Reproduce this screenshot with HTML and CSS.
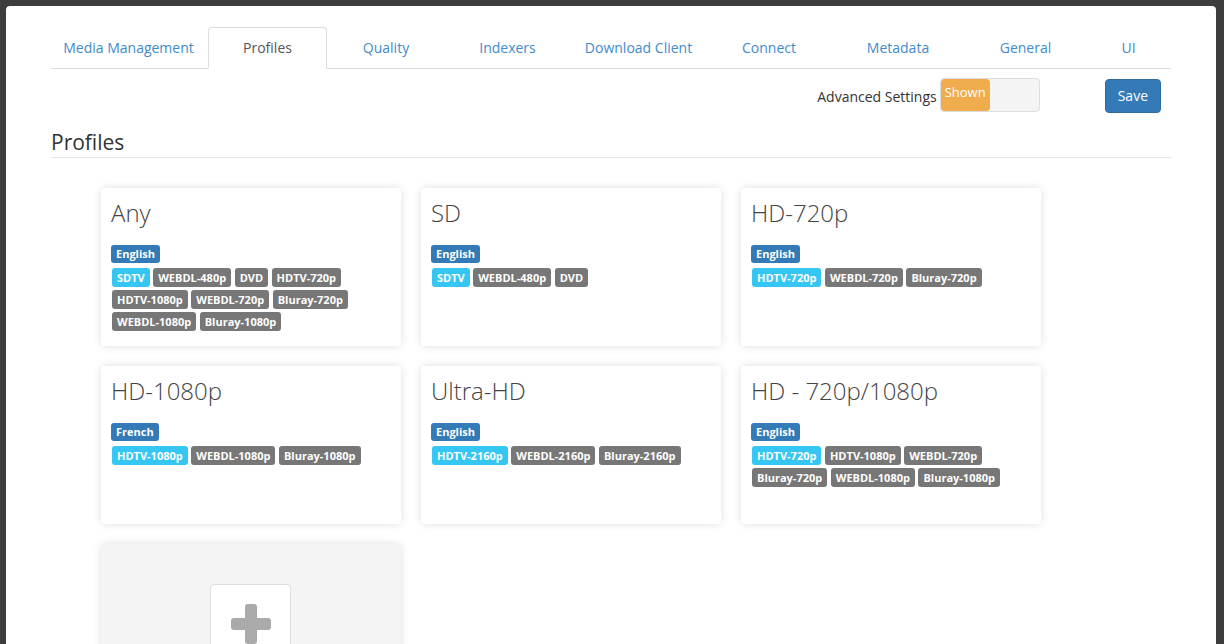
FILE: index.html
```html
<!DOCTYPE html>
<html lang="en">
<head>
  <meta charset="UTF-8" />
  <title>Settings - Profiles</title>
  <link rel="stylesheet" href="styles.css">
</head>
<body>

  <div class="modal">
    <ul class="tabs">
      <li><a href="#">Media Management</a></li>
      <li class="active"><a href="#">Profiles</a></li>
      <li><a href="#">Quality</a></li>
      <li><a href="#">Indexers</a></li>
      <li><a href="#">Download Client</a></li>
      <li><a href="#">Connect</a></li>
      <li><a href="#">Metadata</a></li>
      <li><a href="#">General</a></li>
      <li><a href="#">UI</a></li>
    </ul>

    <div class="toolbar">
      <span class="adv-label">Advanced Settings</span>
      <div class="toggle">
        <span class="toggle-on">Shown</span>
      </div>
      <button class="btn-save">Save</button>
    </div>

    <h2 class="legend">Profiles</h2>

    <div class="profiles">
      <div class="card">
        <h3 class="card-title">Any</h3>
        <div class="lang"><span class="label label-lang">English</span></div>
        <div class="qualities">
          <span class="label label-cutoff">SDTV</span>
          <span class="label">WEBDL-480p</span>
          <span class="label">DVD</span>
          <span class="label">HDTV-720p</span>
          <span class="label">HDTV-1080p</span>
          <span class="label">WEBDL-720p</span>
          <span class="label">Bluray-720p</span>
          <span class="label">WEBDL-1080p</span>
          <span class="label">Bluray-1080p</span>
        </div>
      </div>

      <div class="card">
        <h3 class="card-title">SD</h3>
        <div class="lang"><span class="label label-lang">English</span></div>
        <div class="qualities">
          <span class="label label-cutoff">SDTV</span>
          <span class="label">WEBDL-480p</span>
          <span class="label">DVD</span>
        </div>
      </div>

      <div class="card">
        <h3 class="card-title">HD-720p</h3>
        <div class="lang"><span class="label label-lang">English</span></div>
        <div class="qualities">
          <span class="label label-cutoff">HDTV-720p</span>
          <span class="label">WEBDL-720p</span>
          <span class="label">Bluray-720p</span>
        </div>
      </div>

      <div class="card">
        <h3 class="card-title">HD-1080p</h3>
        <div class="lang"><span class="label label-lang">French</span></div>
        <div class="qualities">
          <span class="label label-cutoff">HDTV-1080p</span>
          <span class="label">WEBDL-1080p</span>
          <span class="label">Bluray-1080p</span>
        </div>
      </div>

      <div class="card">
        <h3 class="card-title">Ultra-HD</h3>
        <div class="lang"><span class="label label-lang">English</span></div>
        <div class="qualities">
          <span class="label label-cutoff">HDTV-2160p</span>
          <span class="label">WEBDL-2160p</span>
          <span class="label">Bluray-2160p</span>
        </div>
      </div>

      <div class="card">
        <h3 class="card-title">HD - 720p/1080p</h3>
        <div class="lang"><span class="label label-lang">English</span></div>
        <div class="qualities">
          <span class="label label-cutoff">HDTV-720p</span>
          <span class="label">HDTV-1080p</span>
          <span class="label">WEBDL-720p</span>
          <span class="label">Bluray-720p</span>
          <span class="label">WEBDL-1080p</span>
          <span class="label">Bluray-1080p</span>
        </div>
      </div>

      <!-- add new profile -->
      <div class="card card-add">
        <div class="add-box">
          <svg width="40" height="40" viewBox="0 0 40 40">
            <rect x="14" y="0" width="12" height="40" rx="3" fill="#aaa" />
            <rect x="0" y="14" width="40" height="12" rx="3" fill="#aaa" />
          </svg>
        </div>
      </div>
    </div>
  </div>

</body>
</html>
```

FILE: styles.css
```css
* { box-sizing: border-box; }
body {
  margin: 0;
  height: 644px;
  overflow: hidden;
  background-color: #3d3d3d;
  font-family: 'Open Sans', 'Liberation Sans', sans-serif;
  font-size: 14px;
  color: #333;
}
.modal {
  margin: 6px 9px 0 6px;
  width: 1210px;
  height: 700px;
  background: #fff;
  border-radius: 4px 4px 0 0;
  padding: 21px 45px 0 45px;
}

/* tabs */
.tabs {
  list-style: none;
  margin: 0;
  padding: 0;
  display: grid;
  grid-template-columns: 157px 119px 118px 125px 137px 124px 134px 121px 85px;
  border-bottom: 1px solid #ddd;
}
.tabs li { margin-bottom: -1px; }
.tabs a {
  display: block;
  padding: 10px 5px;
  line-height: 20px;
  text-align: center;
  color: #428bca;
  text-decoration: none;
  border: 1px solid transparent;
  border-radius: 4px 4px 0 0;
}
.tabs li:first-child a { padding-right: 7px; }
.tabs li.active a {
  color: #555;
  background: #fff;
  border-color: #ddd #ddd transparent;
}

/* toolbar */
.toolbar {
  display: flex;
  justify-content: flex-end;
  align-items: center;
  margin-top: 9px;
  height: 35px;
}
.adv-label { margin-right: 3px; margin-top: 2px; color: #333; }
.toggle {
  width: 100px;
  height: 34px;
  margin-top: -1px;
  border: 1px solid #ddd;
  border-radius: 4px;
  background: #f4f4f4;
  display: flex;
}
.toggle-on {
  width: 49px;
  background: #f0ad4e;
  color: #fff;
  border-radius: 4px;
  font-size: 13px;
  line-height: 27px;
  text-align: center;
}
.btn-save {
  margin-left: 65px;
  margin-right: 10px;
  padding: 6px 12px;
  font-family: inherit;
  font-size: 14px;
  line-height: 20px;
  color: #fff;
  background: #337ab7;
  border: 1px solid #2e6da4;
  border-radius: 4px;
}

.legend {
  margin: 14px 0 30px;
  font-size: 21px;
  font-weight: 400;
  line-height: 30px;
  color: #333;
  border-bottom: 1px solid #e5e5e5;
}

/* profile cards */
.profiles {
  display: flex;
  flex-wrap: wrap;
  gap: 20px;
  width: 990px;
  padding-left: 50px;
}
.card {
  width: 300px;
  height: 158px;
  padding: 10px;
  background: #fff;
  border-radius: 4px;
  box-shadow: 0 0 9px rgba(0, 0, 0, 0.13);
}
.card-title {
  margin: 0 0 17px;
  font-size: 24px;
  font-weight: 300;
  line-height: 30px;
  color: #444;
}
.lang { margin-bottom: 5px; display: flex; }
.qualities { display: flex; flex-wrap: wrap; gap: 3px 3.5px; padding-left: 1px; }
.label {
  display: inline-block;
  padding: 0 5px;
  font-size: 11px;
  font-weight: 700;
  line-height: 19px;
  color: #fff;
  background: #777;
  border-radius: 3px;
}
.label-lang { background: #337ab7; line-height: 18px; }
.label-cutoff { background: #36c6f4; }

.card-add {
  background: #f4f4f4;
  padding-top: 40px;
}
.add-box {
  width: 81px;
  margin-left: 99px;
  padding: 19px 20px;
  background: #fff;
  border: 1px solid #ddd;
  border-radius: 4px;
}
.add-box svg { display: block; }
```
